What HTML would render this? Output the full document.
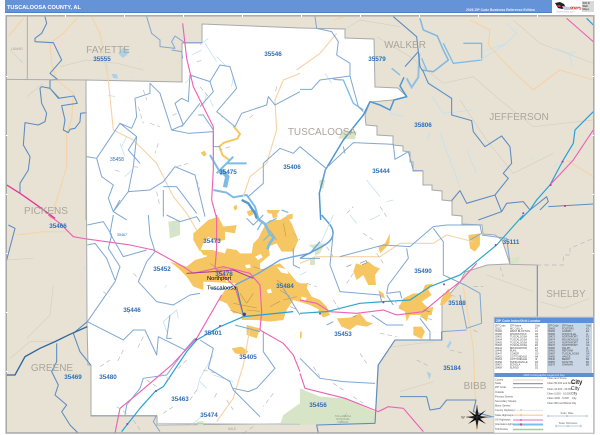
<!DOCTYPE html>
<html><head><meta charset="utf-8"><title>Tuscaloosa County, AL</title>
<style>
html,body{margin:0;padding:0;background:#fff;width:600px;height:435px;overflow:hidden}
body{position:relative;font-family:"Liberation Sans",sans-serif}
svg{display:block;width:600px;height:435px}
.z{fill:none;stroke:#7fa7d3;stroke-width:3;stroke-linejoin:round}
.zd{fill:none;stroke:#5d8cc0;stroke-width:3.2;stroke-linejoin:round}
.c{fill:none;stroke:#adadad;stroke-width:3}
.p{fill:none;stroke:#ec62b6;stroke-width:3.4;stroke-linejoin:round}
.i{fill:none;stroke:#26a0d8;stroke-width:3.6;stroke-linejoin:round}
.o{fill:none;stroke:#f6d3a6;stroke-width:3.4;stroke-linejoin:round}
.r{fill:none;stroke:#7dbce6;stroke-width:4;stroke-linejoin:round}
.s{fill:none;stroke:#c4e0f2;stroke-width:2.4}
.g{fill:none;stroke:#b9b9b9;stroke-width:2;stroke-dasharray:14 9}
.t{fill:none;stroke:#d5d0c2;stroke-width:2}
.u{fill:#f6c662;stroke:none}
.l{font:bold 6.3px "Liberation Sans",sans-serif;fill:#2f6db4;text-anchor:middle}
.m{font:5px "Liberation Sans",sans-serif;fill:#2f6db4;text-anchor:middle}
.n{font:10px "Liberation Sans",sans-serif;fill:#aaa69c;text-anchor:middle}
.k{font:5.8px "Liberation Sans",sans-serif;fill:#000}
.x{font:2.5px "Liberation Sans",sans-serif;fill:#444}
.y{font:2.6px "Liberation Sans",sans-serif;fill:#555}
</style></head><body>
<svg width="600" height="435" viewBox="0 0 600 435" xmlns="http://www.w3.org/2000/svg">
<rect width="600" height="435" fill="#fff"/>
<!-- title -->
<rect x="5" y="0" width="547" height="12.5" fill="#6593d8"/>
<rect x="5" y="12" width="547" height="1" fill="#4f7fc6"/>
<text x="7" y="9" font-size="5.6" font-weight="bold" fill="#fff">TUSCALOOSA COUNTY, AL</text>
<text x="466" y="11" font-size="3.4" font-weight="bold" fill="#e6eefa">2026 ZIP Code Business Reference Edition</text>
<!-- logo -->
<g>
<path d="M555 3l5-1 4 2 2 4-4 1-4-1z" fill="#222"/>
<path d="M557 5l3 0 1 2-3 0z" fill="#d33"/>
<path d="M562 6l8 1 0 3-6 0z" fill="#c6cbe0"/>
<text x="571" y="8" font-size="3" fill="#888">Market</text>
<text x="570" y="9.5" font-size="4" font-weight="bold" fill="#d8322e">MAPS</text>
<text x="556" y="12.5" font-size="2.4" fill="#bbb">marketmaps.com</text>
<rect x="582" y="1" width="12" height="11" fill="#d9d9d9"/>
<text x="582.5" y="4" font-size="2.6" font-weight="bold" fill="#555">SOLD</text>
<text x="582.5" y="7" font-size="2.6" font-weight="bold" fill="#555">Wall</text>
<text x="582.5" y="10" font-size="2.6" font-weight="bold" fill="#555">Maps</text>
</g>
<!-- map base -->
<rect x="6.5" y="16" width="587" height="417" fill="#e7e2d4"/>
<!-- terrain lines on tan -->
<g transform="translate(300,0) scale(.3333)">
<path class="t" d="M230 110L330 170 430 250 520 230 600 300 700 380 880 360M480 300L560 420 640 520 760 460M130 90L180 60 300 80M640 60L720 130 880 190"/>
<path class="s" d="M620 70L650 100 620 130M770 145L810 160 830 155M810 160L815 200M760 500L775 490M690 470L700 480M420 400L480 560M500 450L530 520M560 150L620 130"/>
</g>
<g transform="scale(.3333)">
<path class="t" d="M30 150L70 190M180 200L260 180 350 190 430 210M80 290L130 250"/>
<path d="M355 160l15-18 18 10-8 14-12 8zM335 222l15 0 4 14-14-2zM338 290l14 2-2 10-12-2z" fill="#a9d1ea"/>
<path class="s" d="M60 185l10 4M415 180l4 6M395 232l8 0M320 190l6 24"/>
</g>
<g transform="translate(0,215) scale(.3333)">
<path class="t" d="M30 430L90 380 160 380M160 210L150 300 80 370M20 135L100 130"/>
</g>
<g transform="translate(300,215) scale(.3333)">
<path class="t" d="M560 180L700 230M720 260L790 280 870 250M240 400L400 380M300 530L400 500"/>
<path d="M440 395l10-18 5 6-10 18zM380 470l14 6-6 18z" fill="#a9d1ea"/>
</g>
<!-- county polygon -->
<path d="M202 24L300 28 345 29 345 38 374 39 375 87 398 88 407 97 393 100 370 102 365 115 366 125 377 126 377 135 393 136 393 145 403 146 403 151 410 152 410 162 413 162 413 171 423 171 423 185 432 185 432 190 442 191 442 200 452 201 452 215 462 216 462 224 482 225 483 234 495 235 502 240 510 264 487 265 465 272 460 282 442 303 442 340 395 340 378 365 375 423 157 425 157 416 91 416 91 365 88 365 87 322 86 80 182 82 182 43 202 43Z" fill="#fff" stroke="#a9a9a9" stroke-width="1"/>
<!-- forest -->
<g transform="translate(300,215) scale(.3333)" fill="#d7e5c6">
<path d="M0 520L60 545 135 550 225 590 225 625 0 630Z"/>
<path d="M630 130L660 125 655 145 635 145Z"/>
<path d="M25 90L75 85 60 115 30 130 30 150 45 150 45 105Z"/>
</g>
<g transform="translate(0,215) scale(.3333)" fill="#d7e5c6">
<path d="M840 630L850 600 900 565 900 630Z"/>
<path d="M505 20L540 15 540 60 510 70Z"/>
<path d="M590 620l20-2 0 12-16 4z"/>
</g>
<g transform="translate(300,0) scale(.3333)" fill="#d7e5c6">
<path d="M115 415L130 390 170 395 165 418Z"/>
<path d="M58 540L75 540 70 565 60 565Z"/>
</g>
<!-- urban: main city -->
<g transform="translate(170,210) scale(.3333)">
<path class="u" d="M0 155L50 170 75 150 110 140 125 120 165 130 170 115 200 120 210 130 245 130 250 100 265 85 285 45 300 30 330 30 350 18 365 40 385 90 370 125 335 125 320 100 295 110 300 135 270 160 270 180 310 165 330 160 355 185 380 215 405 225 425 260 450 270 450 300 420 285 370 270 350 300 340 330 300 335 260 330 240 330 215 330 215 310 190 310 170 280 145 270 165 240 190 235 200 220 100 215 100 240 70 230 50 200 25 175Z"/>
<path class="u" d="M70 70L115 30 145 20 160 50 200 45 195 70 165 65 165 90 140 95 115 80 100 100 90 125 70 90Z"/>
<path class="u" d="M90 120L130 120 130 140 100 135Z"/>
<path class="u" d="M230 5l15-6 6 14-14 6zM290 0h40l-8 12-28-2z"/>
<path fill="#fff" d="M255 140l18-8 5 10-14 8zM320 170l30 8 6 14-22-4zM225 165l14-2 4 10-14 2zM290 240l12-4 4 12-12 2zM395 260l16 4-6 8-12-4zM168 210l12-2 0 6-10 2z"/>
<path d="M195 225L265 190 330 150 370 140 420 130 450 95" fill="none" stroke="#6da7de" stroke-width="4"/>
<path d="M120 232Q150 246 190 228" fill="none" stroke="#9ec3e8" stroke-width="5"/>
<path d="M210 250l20 30M250 250l-20 30M190 280l70 14M230 300l40 4M180 300l40 14M330 240l30 20M340 270l40-10M300 290l30-16M360 290l20 8M250 170l30 10M140 180l30-6M320 210l20 14M120 160l18 12M300 60l20 30M340 40l8 40" stroke="#c09850" stroke-width="1.8" fill="none"/>
<!-- lake -->
<path d="M255 0L262 25 285 42 300 72 312 82 298 102 292 118" fill="none" stroke="#7dbce6" stroke-width="8" stroke-linejoin="round"/>
<path d="M275 38L262 60M300 72L280 92M335 0L355 8M290 40L320 25" fill="none" stroke="#7dbce6" stroke-width="4"/>
</g>
<g transform="translate(0,215) scale(.3333)">
<path class="u" d="M695 400L725 395 745 410 735 420 705 415Z"/>
<path class="u" d="M740 330L780 340 770 370 740 360Z"/>
</g>
<g transform="scale(.3333)">
<path class="u" d="M602 458l12-6 6 12-8 6z"/>
<path d="M700 378L720 402 712 416 672 428 658 440 668 466 688 480" fill="none" stroke="#f6c662" stroke-width="6"/>
<path class="u" d="M700 620l10-6 2 12-8 6zM815 640l14-4 4 14-14 6zM860 645l18-4 0 15-16 4z"/>
</g>
<g transform="translate(300,215) scale(.3333)">
<path class="u" d="M0 205L24 205 20 220 0 222ZM0 350L5 350 5 370 0 370Z"/>
<path class="u" d="M60 255L80 275 90 300 70 308 55 290Z"/>
<path class="u" d="M110 310L150 308 180 295 200 320 220 325 200 335 170 330 150 345 125 335Z"/>
<path class="u" d="M235 95L255 85 270 55 268 85 255 100 240 115Z"/>
<path class="u" d="M168 145L185 150 205 140 225 155 240 160 225 180 228 210 205 210 190 180 170 195 160 170Z"/>
<path class="u" d="M235 225L250 235 255 250 240 245Z"/>
<path class="u" d="M375 210L400 205 385 225 395 240 365 260 385 280 400 275 395 300 385 300 380 320 360 300 330 300 320 320 315 290 295 280 310 250 340 235 365 235Z"/>
<path class="u" d="M340 335L365 335 375 350 365 372 340 360Z"/>
<path class="u" d="M505 60L540 55 540 90 525 110 510 100Z"/>
<path class="u" d="M425 250L445 220 455 245 430 270 420 270Z"/>
</g>
<!-- lake & rivers -->
<g transform="scale(.3333)">
<path d="M640 570L680 578 700 592 740 585 765 620 775 655M650 520L700 470M680 490L740 490M630 465L665 525" fill="none" stroke="#7dbce6" stroke-width="6" stroke-linejoin="round"/>
<path d="M665 510L682 530 675 562" fill="none" stroke="#7dbce6" stroke-width="13"/>
<path d="M725 600L745 610 765 640 770 655" fill="none" stroke="#4f98d0" stroke-width="7"/>
<path class="s" d="M600 135L625 115M575 165L605 150M650 170L680 200M610 320L620 280M380 410L365 440M360 430L375 470M395 510L375 530M640 320L630 300M555 250L580 225"/>
<path class="s" d="M700 230L695 260M615 130L650 185M345 290l-20-4"/>
</g>
<g transform="translate(0,215) scale(.3333)">
<path class="s" d="M500 350L490 320 530 285 535 310M640 420L600 490 590 530M700 500L640 480M250 155l5 8M500 210l-6 8M600 500L620 520M575 630L610 600"/>
<path class="s" d="M520 25l6 24M525 35l-10 14"/>
</g>
<g transform="translate(300,215) scale(.3333)">
<path d="M65 0C80 20 110 40 95 70 80 95 40 105 0 130" fill="none" stroke="#5aa0d8" stroke-width="4.5"/>
<path class="s" d="M100 0L60 90M150 0L170 25M240 0L210 15M0 180L20 170"/>
</g>
<g transform="translate(300,0) scale(.3333)">
<path d="M62 660L58 580 76 510 130 420 190 345 210 305 240 315 270 330 282 300 320 290 300 258 312 232" fill="none" stroke="#4f96d0" stroke-width="4.5" stroke-linejoin="round"/>
<path d="M320 235L335 262 355 232 358 160" fill="none" stroke="#8fc1e4" stroke-width="6"/>
<path d="M360 55L370 90 412 108 430 150 445 180 400 215 365 210" fill="none" stroke="#7eb8e2" stroke-width="4.5"/>
<path class="r" d="M430 130L460 190 545 180 545 130 490 130M275 205L300 225M365 175L380 210M100 238L130 240 160 310 190 330"/>
<path class="s" d="M375 240L420 270 455 300M270 340L310 350M395 290L430 340 520 330M540 180L620 130M380 420L390 400"/>
<path class="s" d="M75 220L95 250M200 540L240 590M280 600L260 605"/>
</g>
<!-- highways, orange -->
<g transform="scale(.3333)">
<path class="o" d="M275 50L300 100 325 240 340 390 400 420 470 490 520 590 560 640 590 690M230 55L190 100 150 130 155 190 170 240 220 280 215 360 200 400 200 500 170 600 150 660M70 55L25 110M900 220L850 240 825 300 830 390 800 490 750 530 730 590M750 985L730 1095 700 1195 650 1265M50 705L130 695 200 695"/>
</g>
<g transform="translate(300,0) scale(.3333)">
<path class="o" d="M100 60L130 52M-10 210L60 160 110 100M510 60L570 90 565 135 640 215 700 270 780 210 880 240M800 480L880 530"/>
</g>
<g transform="translate(300,215) scale(.3333)">
<path class="o" d="M0 145L50 125 120 125 240 125 300 85 400 85 440 60 500 75 520 80M490 215L520 400 530 650"/>
</g>
<!-- zip lines -->
<g transform="scale(.3333)">
<path class="zd" d="M135 50L140 70 125 100 105 115 105 125 160 128 185 180 150 220 172 238 150 240 150 265 175 295 222 288 232 310 185 317 195 360 190 390 205 398 210 388 225 385 240 365 242 340 260 338M178 295L150 265 125 260 120 265 125 310 140 340 135 365 115 375 75 368 70 435 90 470 85 510 60 550 60 580"/>
<path class="z" d="M440 50L455 100 480 120 480 140 525 145 515 125 525 108 550 125 550 128 605 128M515 150L545 155 548 175"/>
<path class="z" d="M260 470L290 475 340 400 360 370 395 385 410 350 405 295 450 280 450 250 480 280 515 390 565 400 640 395M515 390L550 375 525 310 545 295 565 305 570 225 630 245 640 275 600 320M630 245L660 195 690 200 710 265 650 335 705 380 725 340 800 315 805 290 825 315 900 275M545 380L600 310M595 345L610 345 640 390M290 475L305 530 340 555 325 595 340 635 360 600M360 370L410 410 385 450 420 490M410 410L400 500 385 575 340 635 380 660M385 575L450 570 490 545 525 500 585 525 615 650M490 560L530 560 590 640M490 570L490 650M900 440L880 460 840 445 790 490 790 550 745 590M640 395L640 440 660 440"/>
<path class="c" d="M82 50L82 240M20 238L258 240 258 660"/>
</g>
<g transform="translate(300,0) scale(.3333)">
<path class="zd" d="M280 50L350 110 355 155 360 200 370 215 385 250 455 295 455 345 515 362 520 395 555 440 605 408 630 440 635 490 610 520 625 535 585 585 500 610 480 572 455 602M585 585L605 635 535 660M605 635L620 610 670 605 690 630 740 590 745 605 720 630M745 620L880 612M355 155L315 200"/>
<path class="z" d="M0 268L35 268 60 240 150 228 175 320 190 335M45 50L50 85 95 95 115 125 110 165 150 190 150 230M0 440L78 505 160 428 280 433 285 478 325 455 340 512 368 512M78 505L70 540M130 440L135 460"/>
</g>
<g transform="translate(0,215) scale(.3333)">
<path class="z" d="M262 30L310 20 335 60 325 100 360 155 345 200 262 320 370 375 400 345 435 345 470 420 475 365 555 405 585 370M262 90L285 85 320 130 345 195M340 0L330 55 370 125 440 105M445 0L450 60 465 110 440 140 415 200 470 260 520 270 570 240 600 235M510 300L500 370 515 370M555 405L500 480 430 490 420 520 380 570 375 600M600 375L640 400 625 460 690 500 700 525 780 605M790 350L790 410 825 460 770 520 745 530 700 520M500 0L540 20 590 5 600 20M790 0L760 30 740 10M705 330L780 350M880 100L880 150 900 160M470 600L460 620 480 650M850 220L900 300"/>
<path d="M25 30L45 40 20 135M262 320L220 355 240 410 272 450" class="zd"/>
<path d="M170 385L170 440 155 470 175 510 165 540 200 570 185 590 210 630 235 655" class="zd"/>
<path d="M262 335L210 358 165 380 120 400 75 425 45 480 20 480" fill="none" stroke="#2c679f" stroke-width="4"/>
<path class="c" d="M272 602L470 602" style="stroke:#7fa7d3"/>
<path class="c" d="M470 625L900 628" style="stroke:#b9c4cc"/>
</g>
<g transform="translate(300,215) scale(.3333)">
<path class="z" d="M100 50L90 150 120 230 240 240 245 260M320 100L325 130 265 210 260 235 300 230 305 250M400 35L330 95 250 90 120 125M400 35L440 30 540 30 545 55 510 75M430 120L430 180 495 210 540 235 545 325 500 340 480 240M545 60L620 70 630 145M215 300L260 330 310 330M0 430L60 490 130 500 225 505M425 350L500 345M0 130L60 130M80 330L100 320M400 40L430 80 430 120M260 240L280 270M360 310L390 350 390 375"/>
<path class="zd" d="M285 375L235 450 225 625 50 630 55 655M712 150L712 305M300 545L380 545 390 585 420 580 440 555 528 555 520 590 575 605M425 350L425 375 285 375"/>
<path class="c" d="M630 148L712 150"/>
<path class="g" d="M710 150L790 150 790 120 810 120 810 100 880 70"/>
</g>
<!-- highways pink/cyan -->
<g transform="scale(.3333)">
<path class="p" d="M548 70L560 175 580 260 605 310 640 380 640 510 635 600 650 655"/>
<path d="M20 555L60 580 110 615 165 655" fill="none" stroke="#e3369c" stroke-width="4"/>
</g>
<g transform="translate(0,215) scale(.3333)">
<path class="p" d="M145 0L180 25 220 65 260 72 390 90 460 105 550 155 580 175 670 155 750 175 780 210 785 290 780 345 850 385 880 420 900 470M650 0L650 100 645 160 705 215 730 300M665 240L590 370 515 450 415 535 360 580 345 655"/>
<path class="i" d="M365 650L420 580 465 530 490 515 560 410 590 375 660 335 730 305 880 290"/>
<path d="M710 215L730 300" fill="none" stroke="#3c8f8e" stroke-width="3"/>
</g>
<g transform="translate(300,215) scale(.3333)">
<path class="p" d="M0 255L50 265 90 290 170 295 250 285 290 300 370 290 430 240 480 200 530 145M0 475L15 520 135 550 235 590 265 575 310 580 370 650"/>
<path d="M0 295L80 290 180 265 250 260 330 255 390 215 480 180 590 90 670 0" fill="none" stroke="#2ea7c8" stroke-width="3.6"/>
</g>
<g transform="translate(300,0) scale(.3333)">
<path class="i" d="M660 660L690 630 710 600 750 555 790 480 820 430 825 390 880 335"/>
<path class="p" d="M750 555L820 480 880 390M800 55L840 90 880 125"/>
<path class="i" d="M860 55L880 75"/>
</g>
<!-- gray local road dashes -->
<g transform="scale(.3333)">
<path class="g" d="M590 185L610 180M600 260L625 290M430 270L440 300M415 320L430 370M450 370L480 380M475 430L465 460M345 510L360 515M400 500L420 502M530 500L565 490M590 540L600 570M530 340L510 350M660 340L670 360M760 345L740 360M830 260L825 280M690 440L660 450M470 575L480 620"/>
<path class="g" d="M400 820L420 840M380 930L395 950M310 875L330 890M430 1010L410 1050M370 1050L350 1090M560 1080L530 1110M480 1120L510 1140M590 1170L570 1200M520 1220L490 1240M650 1180L640 1200M820 1180L790 1220M760 1280L730 1300M680 1200L700 1230M350 1220L380 1240M400 1260L420 1290M300 1100L330 1080M440 1140L470 1160M610 1110L650 1120"/>
<path class="g" d="M1040 640L1060 620M1090 700L1120 720M1130 760L1150 790M1060 820L1040 850M1180 900L1210 930M1260 950L1300 960M1330 880L1370 890M1420 860L1450 860M1000 900L1020 930M1140 1000L1190 1010M1080 1060L1100 1090M1250 1080L1290 1100M1350 1050L1390 1060M1420 990L1440 1000M1500 800L1510 830M1060 1190L1090 1210M1040 1240L1020 1270M940 1100L960 1130M1000 1150L1030 1170M880 700L900 720M980 740L1000 770M1140 620L1160 650M920 850L950 860"/>
<path d="M1040 800l14-6M1080 790l18-8 4 6-16 6M1060 950l10-3M1270 930l20 6" stroke="#8b8b8b" stroke-width="2" fill="none"/>
</g>
<g transform="translate(0,215) scale(.3333)">
<circle cx="733" cy="298" r="5" fill="#3a3fa6"/>
<circle cx="588" cy="373" r="3" fill="#a23a9c"/><circle cx="468" cy="528" r="3" fill="#a23a9c"/><circle cx="660" cy="333" r="3" fill="#a23a9c"/><circle cx="382" cy="627" r="3" fill="#a23a9c"/>
<path d="M560 175L640 170 700 165 760 190" fill="none" stroke="#a23a9c" stroke-width="3"/>
</g>
<g transform="translate(300,215) scale(.3333)"><circle cx="60" cy="296" r="3" fill="#a23a9c"/><circle cx="250" cy="262" r="3" fill="#a23a9c"/><circle cx="432" cy="208" r="3" fill="#a23a9c"/><circle cx="587" cy="90" r="3" fill="#a23a9c"/></g>
<g transform="translate(300,0) scale(.3333)"><circle cx="752" cy="555" r="3" fill="#a23a9c"/><circle cx="788" cy="485" r="3" fill="#a23a9c"/><circle cx="795" cy="618" r="3" fill="#a23a9c"/><circle cx="670" cy="640" r="3" fill="#a23a9c"/></g>
<!-- county labels -->
<text class="n" x="108" y="53">FAYETTE</text>
<text class="n" x="405" y="48">WALKER</text>
<text class="n" x="519" y="120">JEFFERSON</text>
<text class="n" x="322" y="135">TUSCALOOSA</text>
<text class="n" x="46" y="214">PICKENS</text>
<text class="n" x="52" y="371">GREENE</text>
<text class="n" x="475" y="389">BIBB</text>
<text class="n" x="566" y="297">SHELBY</text>
<text x="17" y="50" font-size="3.4" fill="#a8a499" text-anchor="middle">LAMAR</text>
<text x="232" y="430" font-size="3.2" fill="#a8a499" text-anchor="middle">HALE</text>
<text x="343" y="417" font-size="2.8" fill="#8a9a7c" text-anchor="middle">TALLADEGA</text>
<text x="343" y="420" font-size="2.8" fill="#8a9a7c" text-anchor="middle">NATIONAL</text>
<text x="343" y="423" font-size="2.8" fill="#8a9a7c" text-anchor="middle">FOREST</text>
<!-- zips -->
<g>
<text class="l" x="273" y="56">35546</text><text class="l" x="377" y="61">35579</text><text class="l" x="102" y="61">35555</text>
<text class="m" x="117" y="161">35458</text><text class="l" x="228" y="174">35475</text><text class="l" x="292" y="169">35406</text>
<text class="l" x="381" y="173">35444</text><text class="l" x="423" y="127">35806</text><text class="l" x="58" y="228">35466</text>
<text x="122" y="236" font-size="3.6" fill="#2f6db4" text-anchor="middle">35467</text>
<text class="l" x="212" y="243">35473</text><text class="l" x="162" y="271">35452</text><text class="l" x="224" y="276">35478</text>
<text class="l" x="285" y="288">35484</text><text class="l" x="132" y="312">35446</text><text class="l" x="213" y="335">35401</text>
<text class="l" x="248" y="359">35405</text><text class="l" x="73" y="379">35469</text><text class="l" x="108" y="379">35480</text>
<text class="l" x="343" y="336">35453</text><text class="l" x="180" y="401">35463</text><text class="l" x="209" y="417">35474</text>
<text class="l" x="318" y="407">35456</text><text class="l" x="457" y="305">35188</text><text class="l" x="452" y="370">35184</text>
<text class="l" x="423" y="273">35490</text><text class="l" x="511" y="244">35111</text>
</g>
<text class="k" x="207" y="280">Northport</text>
<text class="k" x="207" y="289.5">Tuscaloosa</text>
<!-- frame -->
<rect x="6.2" y="15.8" width="587.6" height="417.2" fill="none" stroke="#a3a3a3" stroke-width="1.4"/>
<g fill="#fff">
<rect x="65" y="15" width="1" height="2"/><rect x="124" y="15" width="1" height="2"/><rect x="183" y="15" width="1" height="2"/><rect x="242" y="15" width="1" height="2"/><rect x="301" y="15" width="1" height="2"/><rect x="360" y="15" width="1" height="2"/><rect x="419" y="15" width="1" height="2"/><rect x="478" y="15" width="1" height="2"/><rect x="537" y="15" width="1" height="2"/>
<rect x="6" y="76" width="2" height="1"/><rect x="6" y="135" width="2" height="1"/><rect x="6" y="194" width="2" height="1"/><rect x="6" y="253" width="2" height="1"/><rect x="6" y="312" width="2" height="1"/><rect x="6" y="371" width="2" height="1"/>
<rect x="592" y="76" width="2" height="1"/><rect x="592" y="135" width="2" height="1"/><rect x="592" y="194" width="2" height="1"/><rect x="592" y="253" width="2" height="1"/>
</g>
<!-- compass -->
<g transform="translate(477,417)">
<path d="M0-12L1.6-2 9-7 3-1 11 0 3 1.6 9 7 1.5 3 0 12-1.5 3-9 7-3 1.6-11 0-3-1-9-7-1.6-2Z" fill="#0a0a0a"/>
<path d="M0-12V12M-11 0H11" stroke="#555" stroke-width=".5"/>
<text x="-14" y="1.4" font-size="3.6" fill="#333" text-anchor="middle">W</text>
<path d="M10 0.5L20-1" stroke="#7fa7d3" stroke-width="1"/>
</g>
<!-- legend panel -->
<g>
<rect x="494" y="317" width="99.5" height="116" fill="#fff"/>
<rect x="494" y="317" width="99.5" height="116" fill="none" stroke="#bcbcbc" stroke-width=".6"/>
<rect x="494.5" y="317.5" width="99" height="5.5" fill="#5e90d8"/>
<text x="496" y="321.8" font-size="3.3" fill="#e9f0fb" font-weight="bold">ZIP Code Index/Grid Locator</text>
<rect x="547" y="323" width="45" height="50" fill="#c9d6e6"/>
<g class="x">
<text x="495" y="326.5" class="x">ZIP Code</text><text x="510" y="326.5" class="x">ZIP Name</text><text x="535" y="326.5" class="x">Grid</text>
<text x="548" y="326.5" class="x">ZIP Code</text><text x="562" y="326.5" class="x">ZIP Name</text><text x="586" y="326.5" class="x">Grid</text>
<text x="495" y="329.3" class="x">35111</text><text x="510" y="329.3" class="x">MC CALLA</text><text x="535" y="329.3" class="x">P7</text><text x="548" y="329.3" class="x">35463</text><text x="562" y="329.3" class="x">FOSTERS</text><text x="586" y="329.3" class="x">K3</text>
<text x="495" y="332.1" class="x">35184</text><text x="510" y="332.1" class="x">WEST BLOCTON</text><text x="535" y="332.1" class="x">L9</text><text x="548" y="332.1" class="x">35466</text><text x="562" y="332.1" class="x">GORDO</text><text x="586" y="332.1" class="x">E1</text>
<text x="495" y="334.9" class="x">35188</text><text x="510" y="334.9" class="x">WOODSTOCK</text><text x="535" y="334.9" class="x">K8</text><text x="548" y="334.9" class="x">35469</text><text x="562" y="334.9" class="x">KNOXVILLE</text><text x="586" y="334.9" class="x">I1</text>
<text x="495" y="337.7" class="x">35401</text><text x="510" y="337.7" class="x">TUSCALOOSA</text><text x="535" y="337.7" class="x">H4</text><text x="548" y="337.7" class="x">35473</text><text x="562" y="337.7" class="x">NORTHPORT</text><text x="586" y="337.7" class="x">F3</text>
<text x="495" y="340.5" class="x">35404</text><text x="510" y="340.5" class="x">TUSCALOOSA</text><text x="535" y="340.5" class="x">G5</text><text x="548" y="340.5" class="x">35474</text><text x="562" y="340.5" class="x">MOUNDVILLE</text><text x="586" y="340.5" class="x">K3</text>
<text x="495" y="343.3" class="x">35405</text><text x="510" y="343.3" class="x">TUSCALOOSA</text><text x="535" y="343.3" class="x">H5</text><text x="548" y="343.3" class="x">35475</text><text x="562" y="343.3" class="x">NORTHPORT</text><text x="586" y="343.3" class="x">D4</text>
<text x="495" y="346.1" class="x">35406</text><text x="510" y="346.1" class="x">TUSCALOOSA</text><text x="535" y="346.1" class="x">E5</text><text x="548" y="346.1" class="x">35476</text><text x="562" y="346.1" class="x">NORTHPORT</text><text x="586" y="346.1" class="x">G4</text>
<text x="495" y="348.9" class="x">35444</text><text x="510" y="348.9" class="x">BROOKWOOD</text><text x="535" y="348.9" class="x">E7</text><text x="548" y="348.9" class="x">35480</text><text x="562" y="348.9" class="x">RALPH</text><text x="586" y="348.9" class="x">I2</text>
<text x="495" y="351.7" class="x">35446</text><text x="510" y="351.7" class="x">BUHL</text><text x="535" y="351.7" class="x">H2</text><text x="548" y="351.7" class="x">35481</text><text x="562" y="351.7" class="x">REFORM</text><text x="586" y="351.7" class="x">D1</text>
<text x="495" y="354.5" class="x">35447</text><text x="510" y="354.5" class="x">COKER</text><text x="535" y="354.5" class="x">G3</text><text x="548" y="354.5" class="x">35487</text><text x="562" y="354.5" class="x">TUSCALOOSA</text><text x="586" y="354.5" class="x">G4</text>
<text x="495" y="357.3" class="x">35452</text><text x="510" y="357.3" class="x">COTTONDALE</text><text x="535" y="357.3" class="x">H6</text><text x="548" y="357.3" class="x">35490</text><text x="562" y="357.3" class="x">VANCE</text><text x="586" y="357.3" class="x">G7</text>
<text x="495" y="360.1" class="x">35453</text><text x="510" y="360.1" class="x">COTTONDALE</text><text x="535" y="360.1" class="x">I6</text><text x="548" y="360.1" class="x">35546</text><text x="562" y="360.1" class="x">BERRY</text><text x="586" y="360.1" class="x">B4</text>
<text x="495" y="362.9" class="x">35456</text><text x="510" y="362.9" class="x">DUNCANVILLE</text><text x="535" y="362.9" class="x">K5</text><text x="548" y="362.9" class="x">35555</text><text x="562" y="362.9" class="x">FAYETTE</text><text x="586" y="362.9" class="x">B2</text>
<text x="495" y="365.7" class="x">35457</text><text x="510" y="365.7" class="x">ECHOLA</text><text x="535" y="365.7" class="x">E2</text><text x="548" y="365.7" class="x">35579</text><text x="562" y="365.7" class="x">OAKMAN</text><text x="586" y="365.7" class="x">B6</text>
<text x="495" y="368.5" class="x">35458</text><text x="510" y="368.5" class="x">ELROD</text><text x="535" y="368.5" class="x">D2</text>
</g>
<rect x="494.5" y="373" width="99" height="4" fill="#5e90d8"/>
<text x="544" y="376.2" font-size="2.8" fill="#e9f0fb" text-anchor="middle">2026 Cartographic Legend &amp; Key</text>
<g class="y">
<text x="495" y="380.5" class="y">County</text><text x="495" y="384" class="y">State</text><text x="495" y="388" class="y">ZIP Code</text>
<text x="495" y="393" class="y">Outside</text><text x="495" y="397.5" class="y">Primary Streets</text><text x="495" y="402" class="y">Secondary Streets</text>
<text x="495" y="406.5" class="y">Minor Streets</text><text x="495" y="411" class="y">County Highways</text><text x="495" y="416" class="y">State Highways</text>
<text x="495" y="420.5" class="y">US Highways</text><text x="495" y="425" class="y">Interstate Highways</text><text x="495" y="430" class="y">Toll Routes</text>
</g>
<path d="M513 380H543" stroke="#d5d5d5" stroke-width="1"/>
<path d="M513 383.6H543" stroke="#9a9a9a" stroke-width="1.3"/>
<path d="M513 387.6H543" stroke="#8fb4dc" stroke-width="1"/>
<path d="M513 410.3H543" stroke="#dedede" stroke-width=".8"/>
<path d="M513 415.3H543" stroke="#f8d7a8" stroke-width="1.5"/>
<path d="M513 420H543" stroke="#f29ad2" stroke-width="1.5"/>
<path d="M513 424.5H543" stroke="#78c0ea" stroke-width="2"/>
<path d="M513 429.5H543" stroke="#8fdc7e" stroke-width="1.6"/>
<circle cx="521" cy="410" r="1" fill="#ccc"/><circle cx="521" cy="415" r="1" fill="#f2c488"/><circle cx="521" cy="420" r="1" fill="#e866b8"/><circle cx="521" cy="424.5" r="1.2" fill="#d6437e"/>
<g class="y">
<text x="547" y="379" class="y">Cities and Towns</text>
<text x="547" y="384" class="y">Cities 50,000 and Above</text>
<text x="547" y="390" class="y">Cities 10,000 - 50,000</text>
<text x="547" y="394.5" class="y">Cities 5,000 - 10,000</text>
<text x="547" y="399" class="y">Cities 1000 - 5,000</text>
<text x="547" y="404" class="y">Cities 500 and Below</text>
</g>
<text x="571" y="384" font-size="6" font-weight="bold" fill="#222">City</text>
<text x="571" y="390" font-size="5" fill="#333">City</text>
<text x="571" y="394.6" font-size="3.6" fill="#333">City</text>
<text x="572" y="399" font-size="2.6" fill="#444">City</text>
<text x="572" y="404" font-size="2.4" fill="#444">City</text>
<g fill="none" stroke="#7d9bbd" stroke-width=".6">
<path d="M548 416H587M548 414.8v2.4M587 414.8v2.4M567 415v2"/>
<path d="M556 426H581M556 424.8v2.4M581 424.8v2.4M568 425v2"/>
</g>
<text x="567" y="414" font-size="2.4" fill="#666" text-anchor="middle">Scale: Miles</text>
<text x="568" y="424" font-size="2.4" fill="#666" text-anchor="middle">Scale: Kilometers</text>
</g>
</svg>
</body></html>
